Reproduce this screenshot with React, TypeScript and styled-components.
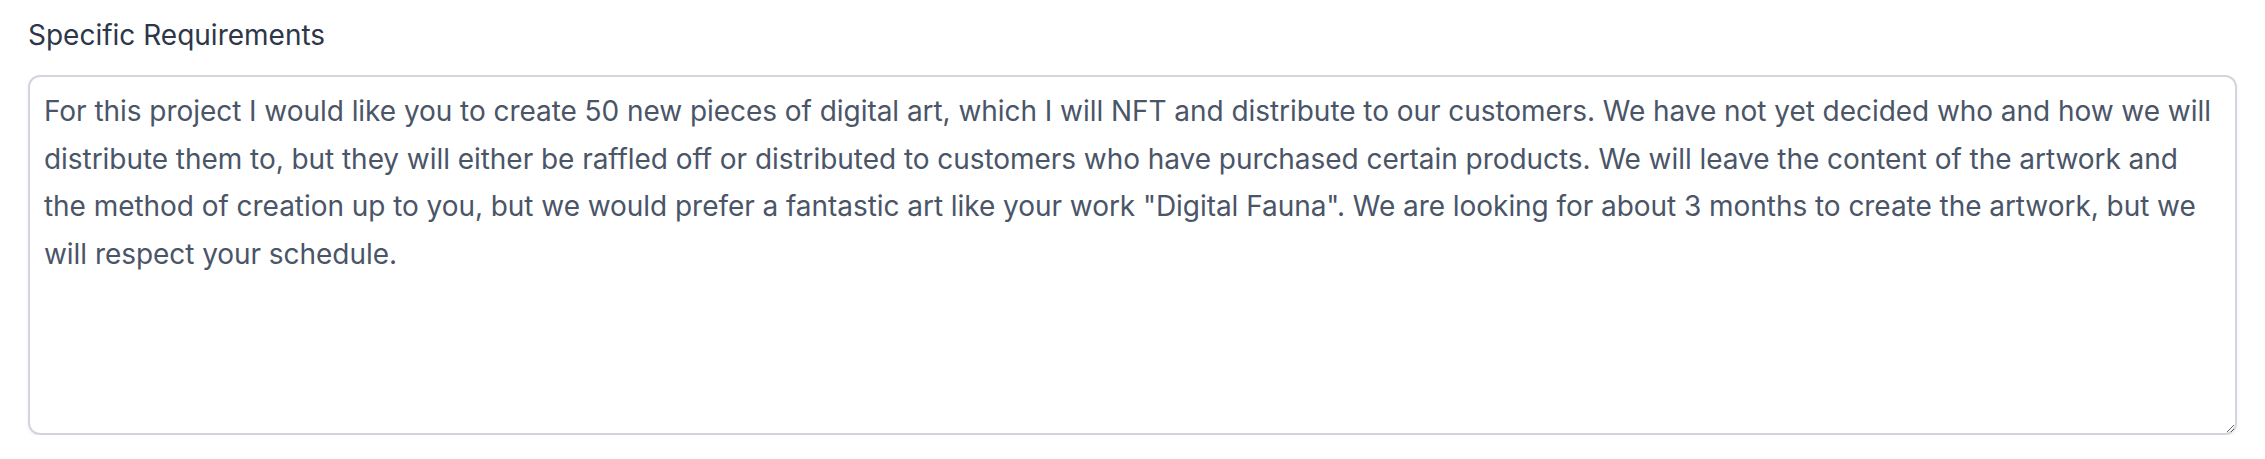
import React from "react";
import styled, { createGlobalStyle } from "styled-components";

const GlobalStyle = createGlobalStyle`
    html, body {
        margin:0;
        padding:0;
        background:#ffffff;
    }
    body {
        font-family: Inter, "Noto Sans", "Liberation Sans", sans-serif;
        -webkit-font-smoothing: antialiased;
    }
`

const Field = styled.div`
    display:flex;
    flex-direction:column;
    gap:20px;
    padding:15px 28px 0 28px;
    box-sizing:border-box;
    width:100%;
`

const Label = styled.label`
    display:block;
    font-size:28px;
    line-height:40px;
    color:#2d3748;
    font-weight:400;
    letter-spacing:0;
`

const TextArea = styled.textarea`
    display:block;
    width:100%;
    height:360px;
    box-sizing:border-box;
    margin:0;
    padding:11px 14px;
    border:2px solid #d2d6dc;
    border-radius:12px;
    box-shadow:0 2px 4px rgba(0,0,0,0.05);
    background:#ffffff;
    font-family: Inter, "Noto Sans", "Liberation Sans", sans-serif;
    font-size:28px;
    line-height:47.5px;
    letter-spacing:-0.05px;
    color:#4a5568;
    resize:vertical;
    outline:none;
    overflow:hidden;
`

const requirements = 'For this project I would like you to create 50 new pieces of digital art, which I will NFT and distribute to our customers. We have not yet decided who and how we will distribute them to, but they will either be raffled off or distributed to customers who have purchased certain products. We will leave the content of the artwork and the method of creation up to you, but we would prefer a fantastic art like your work "Digital Fauna". We are looking for about 3 months to create the artwork, but we will respect your schedule.'

export default function App() {
    return (
        <>
            <GlobalStyle />
            <Field>
                <Label htmlFor="requirements">Specific Requirements</Label>
                <TextArea id="requirements" defaultValue={requirements} />
            </Field>
        </>
    );
}
